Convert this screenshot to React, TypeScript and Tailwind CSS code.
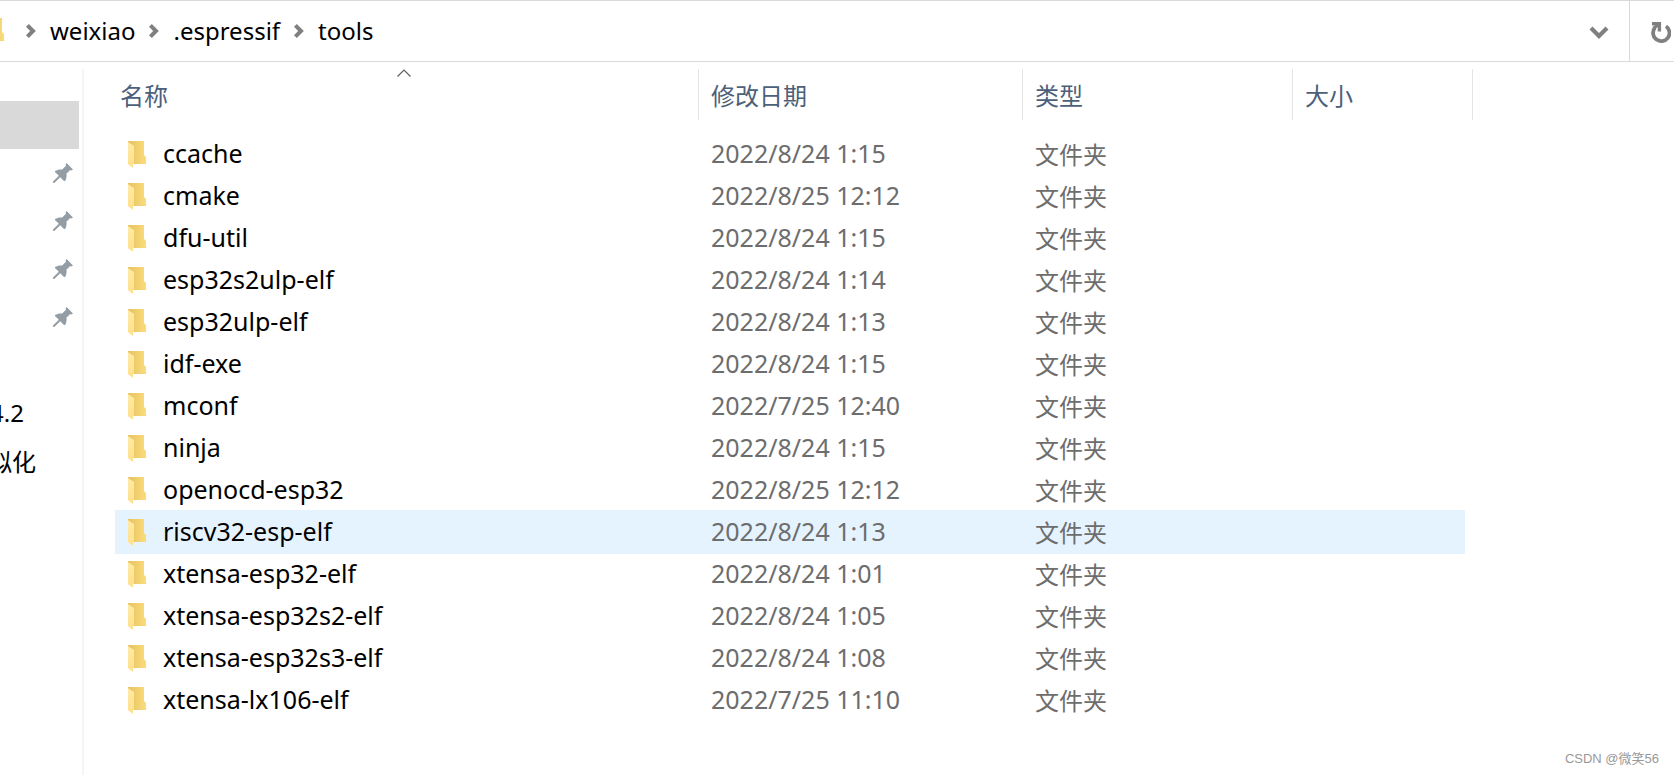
import React from 'react'

interface FolderRow {
  name: string
  modified: string
}

const folders: FolderRow[] = [
  { name: 'ccache', modified: '2022/8/24 1:15' },
  { name: 'cmake', modified: '2022/8/25 12:12' },
  { name: 'dfu-util', modified: '2022/8/24 1:15' },
  { name: 'esp32s2ulp-elf', modified: '2022/8/24 1:14' },
  { name: 'esp32ulp-elf', modified: '2022/8/24 1:13' },
  { name: 'idf-exe', modified: '2022/8/24 1:15' },
  { name: 'mconf', modified: '2022/7/25 12:40' },
  { name: 'ninja', modified: '2022/8/24 1:15' },
  { name: 'openocd-esp32', modified: '2022/8/25 12:12' },
  { name: 'riscv32-esp-elf', modified: '2022/8/24 1:13' },
  { name: 'xtensa-esp32-elf', modified: '2022/8/24 1:01' },
  { name: 'xtensa-esp32s2-elf', modified: '2022/8/24 1:05' },
  { name: 'xtensa-esp32s3-elf', modified: '2022/8/24 1:08' },
  { name: 'xtensa-lx106-elf', modified: '2022/7/25 11:10' },
]

const hovered = 'riscv32-esp-elf'

const FolderIcon = ({ className = '' }: { className?: string }) => (
  <svg className={className} width="20" height="27" viewBox="0 0 20 27" aria-hidden="true">
    <defs>
      <linearGradient id="folder-back" x1="0" x2="1" y1="0" y2="0">
        <stop offset="0" stopColor="#e6c25f" />
        <stop offset="1" stopColor="#fbdc7c" />
      </linearGradient>
      <linearGradient id="folder-front" x1="0" x2="0" y1="0" y2="1">
        <stop offset="0" stopColor="#ffeaa6" />
        <stop offset="1" stopColor="#ffe08a" />
      </linearGradient>
    </defs>
    <path d="M0 0H16V14L18 16V23H0Z" fill="url(#folder-back)" />
    <path d="M0 1L6 5V22L5 23V27L0 23Z" fill="url(#folder-front)" />
    <path d="M18 22L19 23H18Z" fill="#f3e3b4" />
  </svg>
)

const PinIcon = () => (
  <svg width="20" height="20" viewBox="0 0 20 20" fill="#939da5" aria-hidden="true">
    <path d="M13.6 0L20 6.4L18.6 7.4L17.2 7L13.4 10.8C14 13 13.4 15.5 12.2 18H11L7.2 14.2L1.6 19.8L0 20V18.4L5.8 12.8L2 9V8C4.5 6.6 7 6.1 9.2 6.6L13 2.8L12.6 1.3Z" />
  </svg>
)

const Chevron = () => (
  <svg width="10" height="14" viewBox="0 0 10 14" fill="none" stroke="#808080" strokeWidth="4" aria-hidden="true">
    <path d="M1.4 1.4L7 7L1.4 12.6" />
  </svg>
)

const AddressBar = () => (
  <header className="flex h-[62px] items-stretch border-y border-[#d9d9d9]">
    <nav aria-label="路径" className="flex flex-1 items-center overflow-hidden text-black">
      <FolderIcon className="-ml-[14px] shrink-0" />
      <span className="ml-5"><Chevron /></span>
      <a href="#weixiao" className="ml-3.5">weixiao</a>
      <span className="ml-3.5"><Chevron /></span>
      <a href="#espressif" className="ml-3.5">.espressif</a>
      <span className="ml-3.5"><Chevron /></span>
      <a href="#tools" className="ml-3.5">tools</a>
    </nav>
    <button type="button" aria-label="以前的位置" className="flex w-[60px] items-center justify-center pt-1">
      <svg width="20" height="14" viewBox="0 0 20 14" fill="none" stroke="#808080" strokeWidth="4.2">
        <path d="M2 2L10 10L18 2" />
      </svg>
    </button>
    <button type="button" aria-label="刷新" className="flex w-[45px] items-center justify-end border-l border-[#d9d9d9] pt-0.5 pr-[3px]">
      <svg width="20" height="21" viewBox="0 0 20 21" fill="none" stroke="#808080">
        <path d="M4 5.6A8.2 8.2 0 1 0 15 4.2" strokeWidth="3.8" />
        <path d="M1 1.7H8.4V9.5" strokeWidth="3.4" />
        <path d="M2.5 6.5L8 2" strokeWidth="3" />
      </svg>
    </button>
  </header>
)

const Sidebar = () => (
  <aside className="w-[84px] shrink-0 overflow-hidden border-r-2 border-[#f5f5f5] pt-8">
    <ul className="w-[79px] whitespace-nowrap text-black">
      <li className="h-12 bg-[#d9d9d9]" />
      <li className="flex h-12 items-center justify-end pr-1.5"><PinIcon /></li>
      <li className="flex h-12 items-center justify-end pr-1.5"><PinIcon /></li>
      <li className="flex h-12 items-center justify-end pr-1.5"><PinIcon /></li>
      <li className="flex h-12 items-center justify-end pr-1.5"><PinIcon /></li>
      <li className="h-12" />
      <li className="-ml-2.5 flex h-12 items-center">4.2</li>
      <li className="-ml-3 flex h-12 items-center pt-0.5">拟化</li>
    </ul>
  </aside>
)

const FileTable = () => (
  <table className="w-[1358px] table-fixed border-separate border-spacing-0 text-left">
    <colgroup>
      <col className="w-[584px]" />
      <col className="w-[324px]" />
      <col className="w-[270px]" />
      <col className="w-[172px]" />
      <col className="w-[8px]" />
    </colgroup>
    <thead className="text-[#4c607a]">
      <tr className="h-[51px]">
        <th className="relative border-r border-[#e5e5e5] p-0 pt-0.5 pl-[5px] font-normal">
          名称
          <svg className="absolute top-0 left-[282px]" width="14" height="9" viewBox="0 0 14 9" fill="none" stroke="#606060" strokeWidth="1.2" aria-hidden="true">
            <path d="M0.5 7.5L7 1L13.5 7.5" />
          </svg>
        </th>
        <th className="border-r border-[#e5e5e5] p-0 pt-0.5 pl-3 font-normal">修改日期</th>
        <th className="border-r border-[#e5e5e5] p-0 pt-0.5 pl-3 font-normal">类型</th>
        <th colSpan={2} className="border-r border-[#e5e5e5] p-0 pt-0.5 pl-3 font-normal">大小</th>
      </tr>
    </thead>
    <tbody className="text-[#6d6d6d] before:block before:h-[13px]">
      {folders.map((folder) => {
        const tint =
          folder.name === hovered
            ? 'bg-[#e5f3ff] shadow-[0_1px_#e5f3ff,0_-1px_#e5f3ff]'
            : ''
        return (
          <tr key={folder.name} className="h-[42px]">
            <td className={`p-0 pl-3 text-[25px] ${tint}`}>
              <div className="flex items-center gap-[15px] pl-px text-black">
                <FolderIcon />
                <span className="pb-0.5">{folder.name}</span>
              </div>
            </td>
            <td className={`p-0 pb-0.5 pl-3 text-[25px] ${tint}`}>{folder.modified}</td>
            <td className={`p-0 pt-0.5 pl-3 ${tint}`}>文件夹</td>
            <td className={`p-0 ${tint}`} />
          </tr>
        )
      })}
    </tbody>
  </table>
)

const App = () => {
  return (
    <div className="relative flex min-h-screen flex-col bg-white font-['Noto_Sans','Noto_Sans_CJK_SC',sans-serif] text-[24px] leading-8">
      <AddressBar />
      <div className="flex flex-1 pt-[7px]">
        <Sidebar />
        <main className="min-w-0 flex-1 overflow-hidden pl-[31px]">
          <FileTable />
        </main>
      </div>
      <p className="absolute right-[15px] bottom-1.5 font-['Liberation_Sans','Noto_Sans_CJK_SC',sans-serif] text-[13px] leading-5 text-[#999999]">
        CSDN @微笑56
      </p>
    </div>
  )
}

export default App
